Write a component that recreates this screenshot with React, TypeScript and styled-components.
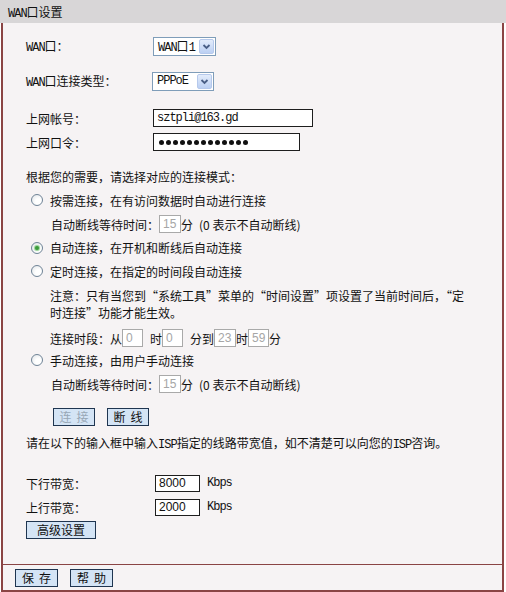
import styled, { createGlobalStyle } from 'styled-components';

const Global = createGlobalStyle`
  html, body { margin: 0; padding: 0; background: #ffffff; }
  body {
    font-family: "Noto Sans CJK SC", "Liberation Sans", sans-serif;
    font-size: 12px;
    color: #111;
  }
`;

const Page = styled.div`
  width: 506px;
  height: 592px;
  display: flex;
  flex-direction: column;
`;
const Header = styled.div`
  height: 23px;
  flex: none;
  background: #d8d6d7;
  display: flex;
  align-items: center;
  padding-left: 8px;
`;
const Body = styled.div`
  flex: 1;
  margin: 0 2px 0 1px;
  border: 2px solid #8a4444;
  border-top: none;
  background: #f6f3f4;
  display: flex;
  flex-direction: column;
`;
const Content = styled.div`
  flex: 1;
  padding-left: 23px;
  display: flex;
  flex-direction: column;
`;
const Footer = styled.div`
  height: 25px;
  flex: none;
  border-top: 1px solid #8a4444;
  display: flex;
  align-items: center;
  gap: 12px;
  padding-left: 12px;
`;
const Line = styled.div<{ $h?: number; $mt?: number; $indent?: number }>`
  height: ${(p) => p.$h ?? 24}px;
  margin-top: ${(p) => p.$mt ?? 0}px;
  padding-left: ${(p) => p.$indent ?? 0}px;
  display: flex;
  align-items: center;
  white-space: nowrap;
`;
const Note = styled.div`
  margin-top: 4px;
  padding-left: 24px;
  line-height: 17px;
  white-space: nowrap;
`;
const Label = styled.span<{ $w: number }>`
  width: ${(p) => p.$w}px;
  flex: none;
`;
const Latin = styled.span`
  font-family: "Liberation Mono", monospace;
  font-size: 12px;
  letter-spacing: -1px;
`;
const Select = styled.div<{ $w: number }>`
  width: ${(p) => p.$w}px;
  height: 19px;
  box-sizing: border-box;
  border: 1px solid #7f9db9;
  background: #fff;
  display: flex;
  align-items: center;
  justify-content: space-between;
  padding: 0 1px 0 4px;
`;
const Arrow = styled.span`
  width: 15px;
  height: 15px;
  box-sizing: border-box;
  border: 1px solid #b6c9ec;
  border-radius: 2px;
  background: linear-gradient(#e3ecfb, #bcd0f3);
  display: flex;
  align-items: center;
  justify-content: center;
`;
const TextBox = styled.div<{ $w: number; $h?: number; $off?: boolean }>`
  width: ${(p) => p.$w}px;
  height: ${(p) => p.$h ?? 18}px;
  box-sizing: border-box;
  border: 1px solid ${(p) => (p.$off ? '#a9a9a9' : '#1e1e1e')};
  background: #fff;
  color: ${(p) => (p.$off ? '#a6a6a6' : '#111')};
  font-family: "Liberation Sans", sans-serif;
  font-size: 12px;
  display: flex;
  align-items: center;
  padding-left: 3px;
  flex: none;
`;
const Dots = styled.div`
  display: flex;
  gap: 2px;
  padding-left: 2px;
`;
const Dot = styled.span`
  width: 5px;
  height: 5px;
  border-radius: 50%;
  background: #111;
`;
const Radio = styled.span<{ $on?: boolean }>`
  width: 12px;
  height: 12px;
  box-sizing: border-box;
  border-radius: 50%;
  border: 1px solid #6f8396;
  background: radial-gradient(circle at 65% 65%, #ffffff 30%, #dfe3e7);
  margin: 0 7px 0 5px;
  display: flex;
  align-items: center;
  justify-content: center;
  flex: none;
  &::after {
    content: '';
    display: ${(p) => (p.$on ? 'block' : 'none')};
    width: 4px;
    height: 4px;
    border-radius: 50%;
    background: #3b9a3b;
    box-shadow: 0 0 1px 1px #8fd08f;
  }
`;
const Gap = styled.span<{ $w: number }>`
  display: inline-block;
  width: ${(p) => p.$w}px;
`;
const Button = styled.button<{ $w: number; $off?: boolean; $spaced?: boolean }>`
  width: ${(p) => p.$w}px;
  height: 18px;
  padding: 0 0 0 ${(p) => (p.$spaced ? 5 : 0)}px;
  letter-spacing: ${(p) => (p.$spaced ? 5 : 0)}px;
  white-space: nowrap;
  border: 1px solid #1f3550;
  background: #d4e4f5;
  color: ${(p) => (p.$off ? '#98a7b5' : '#111')};
  font-family: "Noto Sans CJK SC", sans-serif;
  font-size: 12px;
  display: flex;
  align-items: center;
  justify-content: center;
  flex: none;
`;
const Buttons = styled.div`
  display: flex;
  gap: 12px;
`;

function Chevron() {
  return (
    <svg width="9" height="7" viewBox="0 0 9 7">
      <path d="M1.5 2 L4.5 5 L7.5 2" fill="none" stroke="#4a5f86" strokeWidth="1.8" />
    </svg>
  );
}

export default function App() {
  return (
    <Page>
      <Global />
      <Header>
        <span>
          <Latin>WAN</Latin>口设置
        </span>
      </Header>
      <Body>
        <Content>
          <Line $mt={11}>
            <Label $w={127}>
              <Latin>WAN</Latin>口：
            </Label>
            <Select $w={63}>
              <span>
                <Latin>WAN</Latin>口<Latin>1</Latin>
              </span>
              <Arrow>
                <Chevron />
              </Arrow>
            </Select>
          </Line>
          <Line $mt={11}>
            <Label $w={126}>
              <Latin>WAN</Latin>口连接类型：
            </Label>
            <Select $w={62}>
              <Latin>PPPoE</Latin>
              <Arrow>
                <Chevron />
              </Arrow>
            </Select>
          </Line>
          <Line $mt={13}>
            <Label $w={127}>上网帐号：</Label>
            <TextBox $w={160}>
              <Latin>sztpli@163.gd</Latin>
            </TextBox>
          </Line>
          <Line>
            <Label $w={127}>上网口令：</Label>
            <TextBox $w={147}>
              <Dots>
                {Array.from({ length: 13 }, (_, i) => (
                  <Dot key={i} />
                ))}
              </Dots>
            </TextBox>
          </Line>
          <Line $mt={10}>根据您的需要，请选择对应的连接模式：</Line>
          <Line>
            <Radio />
            按需连接，在有访问数据时自动进行连接
          </Line>
          <Line $indent={25}>
            自动断线等待时间：
            <TextBox $w={22} $off>
              15
            </TextBox>
            分<Gap $w={6} />(0 表示不自动断线)
          </Line>
          <Line $h={23}>
            <Radio $on />
            自动连接，在开机和断线后自动连接
          </Line>
          <Line>
            <Radio />
            定时连接，在指定的时间段自动连接
          </Line>
          <Note>
            注意：只有当您到“系统工具”菜单的“时间设置”项设置了当前时间后，“定
            <br />
            时连接”功能才能生效。
          </Note>
          <Line $mt={6} $h={22} $indent={24}>
            连接时段：从
            <TextBox $w={21} $off>
              0
            </TextBox>
            <Gap $w={7} />时
            <TextBox $w={21} $off>
              0
            </TextBox>
            <Gap $w={7} />分到
            <TextBox $w={22} $off>
              23
            </TextBox>
            时
            <TextBox $w={21} $off>
              59
            </TextBox>
            分
          </Line>
          <Line $h={22}>
            <Radio />
            手动连接，由用户手动连接
          </Line>
          <Line $mt={1} $indent={25}>
            自动断线等待时间：
            <TextBox $w={22} $off>
              15
            </TextBox>
            分<Gap $w={6} />(0 表示不自动断线)
          </Line>
          <Line $mt={8} $h={25} $indent={27}>
            <Buttons>
              <Button $w={42} $off $spaced>
                连接
              </Button>
              <Button $w={42} $spaced>
                断线
              </Button>
            </Buttons>
          </Line>
          <Line $mt={2}>
            <span>
              请在以下的输入框中输入<Latin>ISP</Latin>指定的线路带宽值，如不清楚可以向您的<Latin>ISP</Latin>咨询。
            </span>
          </Line>
          <Line $mt={16}>
            <Label $w={129}>下行带宽：</Label>
            <TextBox $w={45} $h={17}>
              8000
            </TextBox>
            <Gap $w={7} />
            <Latin>Kbps</Latin>
          </Line>
          <Line>
            <Label $w={129}>上行带宽：</Label>
            <TextBox $w={45} $h={17}>
              2000
            </TextBox>
            <Gap $w={7} />
            <Latin>Kbps</Latin>
          </Line>
          <Line $h={21}>
            <Button $w={70}>高级设置</Button>
          </Line>
        </Content>
        <Footer>
          <Button $w={43} $spaced>
            保存
          </Button>
          <Button $w={43} $spaced>
            帮助
          </Button>
        </Footer>
      </Body>
    </Page>
  );
}
